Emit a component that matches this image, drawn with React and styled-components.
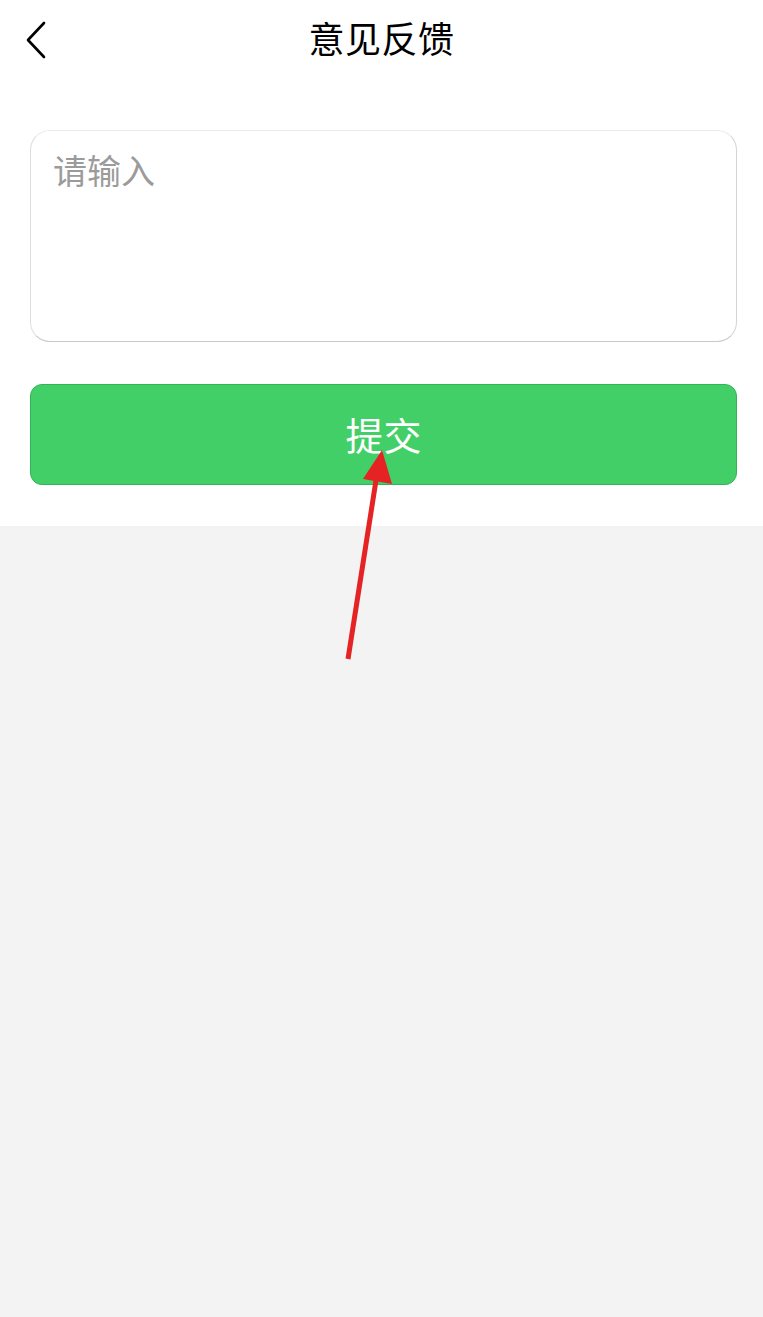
import React from "react";
import styled, { createGlobalStyle } from "styled-components";

const GlobalStyle = createGlobalStyle`
  html, body { margin: 0; padding: 0; background: #f3f3f3; }
  body { font-family: "Noto Sans CJK SC", "Noto Sans", sans-serif; }
  * { box-sizing: border-box; }
`;

const Page = styled.div`
  position: relative;
  width: 763px;
  min-height: 1317px;
  background: #f3f3f3;
`;

const Top = styled.div`
  background: #ffffff;
  padding: 0 26px 41px 30px;
`;

const Header = styled.header`
  position: relative;
  height: 78px;
  display: flex;
  align-items: center;
  justify-content: center;
  padding-bottom: 5px;
  margin: 0 -26px 0 -30px;
`;

const BackButton = styled.button`
  position: absolute;
  left: 20px;
  top: 20px;
  width: 30px;
  height: 40px;
  border: 0;
  background: none;
  padding: 0;
  display: flex;
  align-items: center;
  justify-content: center;
`;

const Title = styled.h1`
  margin: 0;
  font-size: 36px;
  font-weight: 400;
  color: #000;
  letter-spacing: 0.5px;
`;

const Form = styled.div`
  display: flex;
  flex-direction: column;
  gap: 42px;
  margin-top: 52px;
`;

const TextArea = styled.textarea`
  display: block;
  width: 100%;
  height: 212px;
  resize: none;
  border: 1px solid;
  border-color: #ebebeb #d4d4d4 #c8c8c8 #dedede;
  border-radius: 20px;
  padding: 17px 22px;
  font-family: inherit;
  font-size: 34px;
  line-height: 1.3;
  color: #333;
  background: #fff;
  outline: none;
  &::placeholder { color: #9b9b9b; }
`;

const SubmitButton = styled.button`
  height: 101px;
  width: 100%;
  border: 1px solid #34b457;
  border-radius: 12px;
  background: #43cf67;
  color: #fff;
  font-family: inherit;
  font-size: 38px;
  font-weight: 400;
  display: flex;
  align-items: center;
  justify-content: center;
  padding: 0 0 2px;
`;

const Annotation = styled.svg`
  position: absolute;
  left: 0;
  top: 0;
  pointer-events: none;
`;

export default function App() {
  return (
    <Page>
      <GlobalStyle />
      <Top>
        <Header>
          <BackButton aria-label="返回">
            <svg width="24" height="40" viewBox="0 0 24 40">
              <path d="M21 3 L5 20 L21 37" fill="none" stroke="#000" strokeWidth="2.6" strokeLinecap="round" strokeLinejoin="round" />
            </svg>
          </BackButton>
          <Title>意见反馈</Title>
        </Header>
        <Form>
          <TextArea placeholder="请输入" />
          <SubmitButton>提交</SubmitButton>
        </Form>
      </Top>
      <Annotation width="763" height="1317" viewBox="0 0 763 1317">
        <line x1="348" y1="659" x2="377" y2="474" stroke="#e52224" strokeWidth="5" />
        <polygon points="382,450 363,479 392,484" fill="#e52224" />
      </Annotation>
    </Page>
  );
}
